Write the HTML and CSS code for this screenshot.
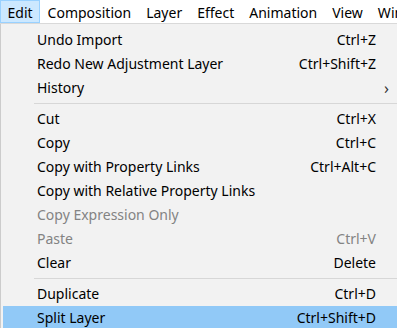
FILE: index.html
```html
<!DOCTYPE html>
<html>

<head>
  <meta name="viewport" content="width=device-width, initial-scale=1">
  <title>Edit menu</title>
  <link rel="stylesheet" href="styles.css">
</head>

<body>
  <div class="menubar">
    <div class="menubar-item open">Edit</div>
    <div class="menubar-item">Composition</div>
    <div class="menubar-item">Layer</div>
    <div class="menubar-item">Effect</div>
    <div class="menubar-item">Animation</div>
    <div class="menubar-item">View</div>
    <div class="menubar-item">Window</div>
  </div>

  <div class="dropdown">
    <div class="item"><span class="label">Undo Import</span><span class="key">Ctrl+Z</span><span class="arrow"></span></div>
    <div class="item"><span class="label">Redo New Adjustment Layer</span><span class="key">Ctrl+Shift+Z</span><span class="arrow"></span></div>
    <div class="item"><span class="label">History</span><span class="key"></span><span class="arrow">&#8250;</span></div>
    <div class="sep"></div>
    <div class="item"><span class="label">Cut</span><span class="key">Ctrl+X</span><span class="arrow"></span></div>
    <div class="item"><span class="label">Copy</span><span class="key">Ctrl+C</span><span class="arrow"></span></div>
    <div class="item"><span class="label">Copy with Property Links</span><span class="key">Ctrl+Alt+C</span><span class="arrow"></span></div>
    <div class="item"><span class="label">Copy with Relative Property Links</span><span class="key"></span><span class="arrow"></span></div>
    <div class="item disabled"><span class="label">Copy Expression Only</span><span class="key"></span><span class="arrow"></span></div>
    <div class="item disabled"><span class="label">Paste</span><span class="key">Ctrl+V</span><span class="arrow"></span></div>
    <div class="item"><span class="label">Clear</span><span class="key">Delete</span><span class="arrow"></span></div>
    <div class="sep"></div>
    <div class="item"><span class="label">Duplicate</span><span class="key">Ctrl+D</span><span class="arrow"></span></div>
    <div class="item active"><span class="label">Split Layer</span><span class="key">Ctrl+Shift+D</span><span class="arrow"></span></div>
  </div>
</body>

</html>
```

FILE: styles.css
```css
html,
body {
  margin: 0;
  padding: 0;
  overflow: hidden;
}

body {
  font-family: "Noto Sans", "Open Sans", sans-serif;
  font-size: 14px;
  color: #000;
  background-color: #fff;
  width: 397px;
  height: 328px;
}

.menubar {
  display: flex;
  height: 23px;
  background-color: #fff;
  border-bottom: 1px solid #d9d9d9;
  white-space: nowrap;
}

.menubar-item {
  padding: 1px 6.5px 0;
  line-height: 21px;
  box-sizing: border-box;
  border: 1px solid transparent;
}

.menubar-item.open {
  background-color: #cce8ff;
  border-color: #99d1ff;
}

.dropdown {
  width: 420px;
  height: 320px;
  background-color: #f2f2f2;
  border-left: 1px solid #cccccc;
  padding: 4px 0 0 2px;
  box-sizing: border-box;
}

.item {
  display: grid;
  grid-template-columns: 1fr auto 21px;
  height: 24px;
  line-height: 24px;
  padding-left: 34px;
  width: 394px;
  box-sizing: border-box;
  white-space: nowrap;
}

.item .arrow {
  text-align: center;
  color: #333;
  font-size: 16px;
}

.item.disabled {
  color: #838383;
}

.item.active {
  background-color: #91c9f7;
}

.sep {
  height: 1px;
  background-color: #d7d7d7;
  margin: 3px 0 3px 31px;
}
```
